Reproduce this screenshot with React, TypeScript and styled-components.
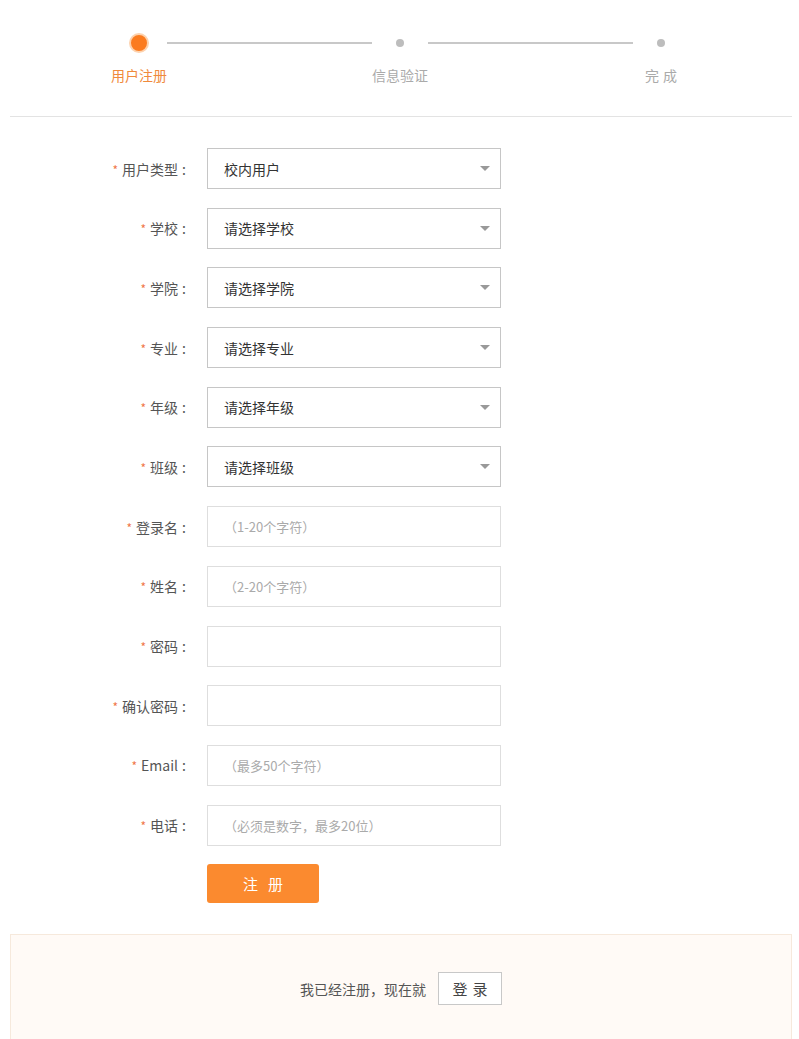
import styled, { createGlobalStyle } from "styled-components";

const GlobalStyle = createGlobalStyle`
  body {
    margin: 0;
    background: #fff;
    font-family: "Microsoft YaHei", "Noto Sans CJK SC", "Noto Sans", sans-serif;
    color: #555;
  }
`;

type Field = {
  label: string;
  kind: "select" | "input";
  value?: string;
  placeholder?: string;
};

const fields: Field[] = [
  { label: "用户类型", kind: "select", value: "校内用户" },
  { label: "学校", kind: "select", value: "请选择学校" },
  { label: "学院", kind: "select", value: "请选择学院" },
  { label: "专业", kind: "select", value: "请选择专业" },
  { label: "年级", kind: "select", value: "请选择年级" },
  { label: "班级", kind: "select", value: "请选择班级" },
  { label: "登录名", kind: "input", placeholder: "（1-20个字符）" },
  { label: "姓名", kind: "input", placeholder: "（2-20个字符）" },
  { label: "密码", kind: "input" },
  { label: "确认密码", kind: "input" },
  { label: "Email", kind: "input", placeholder: "（最多50个字符）" },
  { label: "电话", kind: "input", placeholder: "（必须是数字，最多20位）" },
];

function App() {
  return (
    <Wrapper>
      <GlobalStyle />
      <Steps>
        <Step>
          <ActiveDot />
          <StepLabel $active>用户注册</StepLabel>
        </Step>
        <StepLine />
        <Step>
          <Dot />
          <StepLabel>信息验证</StepLabel>
        </Step>
        <StepLine />
        <Step>
          <Dot />
          <StepLabel $spaced>完成</StepLabel>
        </Step>
      </Steps>
      <Divider />
      <Form>
        {fields.map((f) => (
          <Row key={f.label}>
            <Label>
              <Star>*</Star>
              {f.label}
              <Colon>:</Colon>
            </Label>
            {f.kind === "select" ? (
              <SelectBox>
                <span>{f.value}</span>
                <Caret />
              </SelectBox>
            ) : (
              <InputBox>{f.placeholder}</InputBox>
            )}
          </Row>
        ))}
        <Row>
          <span />
          <SubmitButton>注册</SubmitButton>
        </Row>
      </Form>
      <LoginBar>
        <span>我已经注册，现在就</span>
        <LoginButton>登录</LoginButton>
      </LoginBar>
    </Wrapper>
  );
}

export default App;

const Wrapper = styled.div`
  width: 782px;
  margin-left: 10px;
`;

const Steps = styled.div`
  display: flex;
  align-items: flex-start;
  padding: 33px 0 0 101px;
  height: 116px;
  box-sizing: border-box;
`;

const Step = styled.div`
  width: 56px;
  display: flex;
  flex-direction: column;
  align-items: center;
`;

const ActiveDot = styled.div`
  width: 16px;
  height: 16px;
  border-radius: 50%;
  background: #fb7b1f;
  border: 2px solid #fdd2ae;
`;

const Dot = styled.div`
  width: 8px;
  height: 8px;
  margin: 6px 0;
  border-radius: 50%;
  background: #bdbdbd;
`;

const StepLabel = styled.span<{ $active?: boolean; $spaced?: boolean }>`
  margin-top: 12px;
  font-size: 14px;
  white-space: nowrap;
  letter-spacing: ${(p) => (p.$spaced ? "4px" : "0")};
  margin-right: ${(p) => (p.$spaced ? "-4px" : "0")};
  color: ${(p) => (p.$active ? "#f08a3c" : "#aaa")};
`;

const StepLine = styled.div`
  width: 205px;
  height: 2px;
  margin-top: 9px;
  background: #c8c8c8;
`;

const Divider = styled.div`
  height: 1px;
  background: #e3e3e3;
`;

const Form = styled.div`
  display: flex;
  flex-direction: column;
  gap: 18.7px;
  padding-top: 31px;
`;

const Row = styled.div`
  display: grid;
  grid-template-columns: 180px 294px;
  column-gap: 17px;
  align-items: center;
`;

const Label = styled.div`
  text-align: right;
  font-size: 14px;
  color: #555;
  white-space: nowrap;
`;

const Star = styled.span`
  color: #f0774a;
  margin-right: 4px;
  font-size: 12px;
`;

const Colon = styled.span`
  display: inline-block;
  width: 12px;
  text-align: center;
`;

const SelectBox = styled.div`
  height: 41px;
  box-sizing: border-box;
  border: 1px solid #c6c6c6;
  padding: 0 10px 0 16px;
  display: flex;
  align-items: center;
  justify-content: space-between;
  font-size: 14px;
  color: #333;
`;

const Caret = styled.span`
  width: 0;
  height: 0;
  border-left: 5px solid transparent;
  border-right: 5px solid transparent;
  border-top: 5px solid #999;
`;

const InputBox = styled.div`
  height: 41px;
  box-sizing: border-box;
  border: 1px solid #dedede;
  padding: 0 16px;
  display: flex;
  align-items: center;
  font-size: 13px;
  color: #aaa;
`;

const SubmitButton = styled.button`
  width: 112px;
  height: 39px;
  border: none;
  border-radius: 3px;
  background: #fb8a2f;
  color: #fff;
  font-family: inherit;
  font-size: 15px;
  letter-spacing: 10px;
  text-indent: 10px;
  cursor: pointer;
`;

const LoginBar = styled.div`
  margin-top: 31px;
  padding: 37px 0 44px;
  background: #fffaf6;
  border: 1px solid #f6e9dc;
  display: flex;
  justify-content: center;
  align-items: center;
  gap: 12px;
  font-size: 14px;
  color: #555;
`;

const LoginButton = styled.button`
  width: 64px;
  height: 33px;
  background: #fff;
  border: 1px solid #c8c8c8;
  font-family: inherit;
  font-size: 15px;
  color: #444;
  letter-spacing: 5px;
  text-indent: 5px;
  cursor: pointer;
`;
